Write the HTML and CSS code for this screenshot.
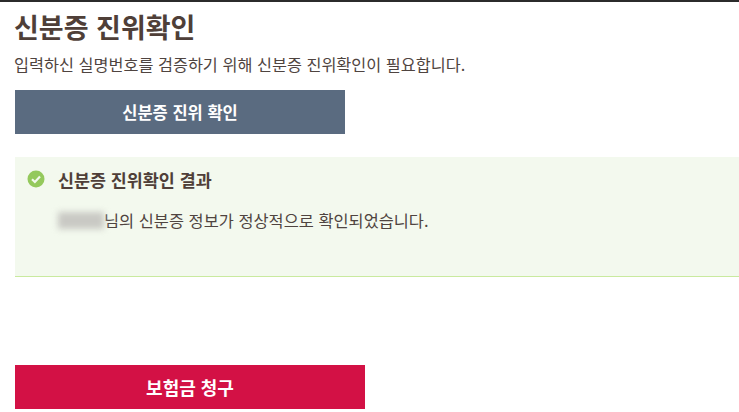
FILE: index.html
```html
<!DOCTYPE html>
<html lang="ko">
  <head>
    <meta charset="UTF-8" />
    <meta name="viewport" content="width=device-width, initial-scale=1.0" />
    <title>신분증 진위확인</title>
    <link rel="stylesheet" href="styles.css">
  </head>
  <body>
    <div class="container">
      <h1>신분증 진위확인</h1>
      <p class="intro">입력하신 실명번호를 검증하기 위해 신분증 진위확인이 필요합니다.</p>
      <button class="btn btn-check">신분증 진위 확인</button>

      <div class="result">
        <div class="result-title">
          <svg class="check-icon" width="18" height="18" viewBox="0 0 18 18">
            <circle cx="9" cy="9" r="8.5" fill="#94c95c" />
            <path d="M5 9.2l2.9 2.8L13 6.6" fill="none" stroke="#f3f9ee" stroke-width="2.2" />
          </svg>
          <strong>신분증 진위확인 결과</strong>
        </div>
        <p class="result-text"><span class="blurred"></span>님의 신분증 정보가 정상적으로 확인되었습니다.</p>
      </div>

      <button class="btn btn-claim">보험금 청구</button>
    </div>
  </body>
</html>
```

FILE: styles.css
```css
* {
  margin: 0;
  padding: 0;
  box-sizing: border-box;
  font-family: 'Noto Sans CJK KR', 'Noto Sans', sans-serif;
}

body {
  background: #fff;
  border-top: 2px solid #2b2b2b;
  height: 412px;
  overflow: hidden;
}

.container {
  padding-left: 15px;
}

h1 {
  color: #4f3f38;
  font-size: 27px;
  font-weight: 700;
  line-height: 34px;
  margin-top: 8px;
  margin-left: -1px;
}

.intro {
  color: #4f4440;
  font-size: 16.3px;
  line-height: 20px;
  margin-top: 10px;
  margin-left: -1px;
}

.btn {
  display: block;
  border: none;
  color: #fff;
  font-weight: 700;
}

.btn-check {
  background: #5a6b80;
  width: 330px;
  height: 44px;
  margin-top: 16px;
  font-size: 16.5px;
}

.result {
  background: #f3f9ee;
  border-bottom: 1px solid #c9ea9f;
  height: 120px;
  margin-top: 23px;
  padding: 11px 0 0 12px;
}

.result-title {
  display: flex;
  align-items: center;
  gap: 13px;
  height: 22px;
}

.result-title strong {
  color: #4f3f38;
  font-size: 17.4px;
  font-weight: 700;
}

.result-text {
  display: flex;
  align-items: center;
  color: #4f4440;
  font-size: 16.4px;
  line-height: 20px;
  margin-top: 20px;
  padding-left: 31px;
}

.blurred {
  background: #c9c9c4;
  width: 46px;
  height: 17px;
  filter: blur(3px);
}

.btn-claim {
  background: #d31145;
  width: 350px;
  height: 44px;
  margin-top: 88px;
  font-size: 18px;
}
```
